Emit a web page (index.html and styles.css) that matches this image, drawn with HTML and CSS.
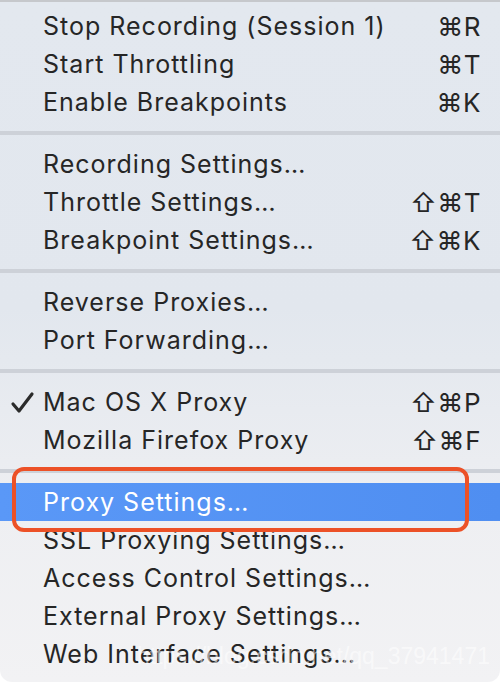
FILE: index.html
```html
<!DOCTYPE html>
<html lang="en">
<head>
    <meta charset="UTF-8">
    <title>Proxy Menu</title>
    <link rel="stylesheet" href="styles.css">
</head>
<body>
    <div class="menu">
        <div class="item"><span class="label">Stop Recording (Session 1)</span><span class="keys">⌘R</span></div>
        <div class="item"><span class="label">Start Throttling</span><span class="keys">⌘T</span></div>
        <div class="item"><span class="label">Enable Breakpoints</span><span class="keys">⌘K</span></div>
        <div class="sep"></div>
        <div class="item"><span class="label">Recording Settings…</span></div>
        <div class="item"><span class="label">Throttle Settings…</span><span class="keys">⇧⌘T</span></div>
        <div class="item"><span class="label">Breakpoint Settings…</span><span class="keys">⇧⌘K</span></div>
        <div class="sep"></div>
        <div class="item"><span class="label">Reverse Proxies…</span></div>
        <div class="item"><span class="label">Port Forwarding…</span></div>
        <div class="sep"></div>
        <div class="item">
            <svg class="check" width="26" height="24" viewBox="0 0 26 24"><path d="M3 13 L9 20 L22 3" fill="none" stroke="#2b2b2b" stroke-width="3.2" stroke-linecap="round" stroke-linejoin="round"/></svg>
            <span class="label">Mac OS X Proxy</span><span class="keys">⇧⌘P</span>
        </div>
        <div class="item"><span class="label">Mozilla Firefox Proxy</span><span class="keys">⇧⌘F</span></div>
        <div class="sep"></div>
        <div class="item active"><span class="label">Proxy Settings…</span></div>
        <div class="item"><span class="label">SSL Proxying Settings…</span></div>
        <div class="item"><span class="label">Access Control Settings…</span></div>
        <div class="item"><span class="label">External Proxy Settings…</span></div>
        <div class="item"><span class="label">Web Interface Settings…</span></div>

        <div class="mark"></div>
        <div class="watermark">https://blog.csdn.net/qq_37941471</div>
    </div>
</body>
</html>
```

FILE: styles.css
```css
html, body {
    margin: 0;
    padding: 0;
    background: #ffffff;
}
body {
    font-family: Inter, "Open Sans", sans-serif;
    color: #262626;
}
.menu {
    position: relative;
    width: 500px;
    height: 682px;
    box-sizing: border-box;
    border-top: 2px solid #c6c8cc;
    padding-top: 5px;
    border-radius: 0 0 12px 12px;
    background: linear-gradient(180deg, #e3e8ef 0%, #e2e7ee 45%, #eeeff2 75%, #f2f2f4 100%);
    overflow: hidden;
}
.item {
    position: relative;
    display: flex;
    align-items: center;
    height: 38px;
    padding: 0 19px 0 43px;
    font-size: 25px;
    letter-spacing: 1px;
}
.keys {
    margin-left: auto;
    font-size: 26px;
    letter-spacing: 0.5px;
}
.check {
    position: absolute;
    left: 10px;
    top: 8px;
}
.sep {
    height: 24px;
    display: flex;
    align-items: center;
}
.sep::before {
    content: "";
    display: block;
    width: 100%;
    height: 4px;
    background: #cdd1d8;
}
.active {
    background: linear-gradient(90deg, #5a98f7 0%, #4f8ef1 100%);
    color: #ffffff;
}
.mark {
    position: absolute;
    left: 12px;
    top: 465px;
    width: 449px;
    height: 57px;
    border: 4px solid #ec5127;
    border-radius: 12px;
}
.watermark {
    position: absolute;
    right: 10px;
    bottom: 12px;
    font-family: "Liberation Sans", Arial, sans-serif;
    font-size: 23px;
    color: rgba(255, 255, 255, 0.55);
}
```
